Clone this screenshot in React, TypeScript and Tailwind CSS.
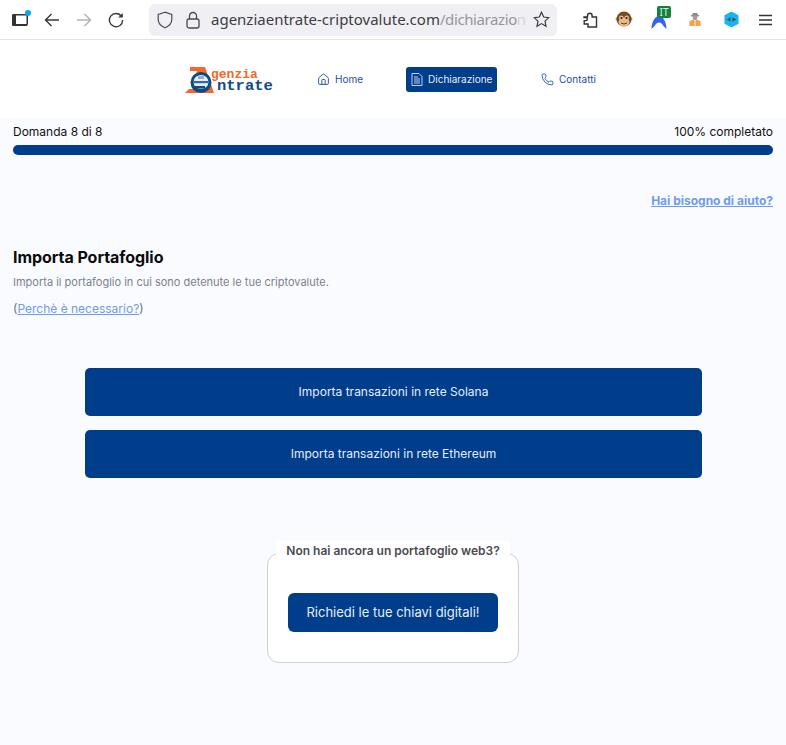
import React from "react";
import { House, Phone } from "lucide-react";

const Nav = ({ icon, label, active }: { icon: React.ReactNode; label: string; active?: boolean }) => (
  <div className={active ? "flex h-[25px] w-[91px] items-center gap-[5px] rounded-[3px] bg-[#003d8a] pl-[5px] text-[10px] text-[#e4eefc]" : "flex h-[25px] items-center gap-[5px] px-[6px] text-[10px] text-[#1d4f9c]"}>
    {icon}
    <span>{label}</span>
  </div>
);

export default function App() {
  return (
    <div className="flex h-[745px] w-[786px] flex-col overflow-hidden bg-[#fafbfe] font-['Inter',sans-serif]">
      {/* browser toolbar */}
      <div className="flex h-[40px] shrink-0 items-center border-b border-[#e3e3e5] bg-white">
        <div className="relative ml-[12px] h-[12px] w-[16px]">
          <svg className="block" width="16" height="12" viewBox="0 0 16 12"><rect x="0.75" y="0.75" width="14.5" height="10.5" rx="1.5" fill="none" stroke="#333" strokeWidth="1.5"/><path d="M1.500 0H4V10H15V12H1.500A1.500 1.500 0 0 1 0 10.500V1.500A1.500 1.500 0 0 1 1.500 0z" fill="#333"/></svg>
          <span className="absolute right-[-3px] top-[-4px] h-[6px] w-[6px] rounded-full bg-[#0ea5f0]" />
        </div>
        <svg className="ml-[16px]" width="16" height="16" viewBox="0 0 16 16" fill="none" stroke="#3a3a3c" strokeWidth="1.4"><path d="M15 8H1.500M7.500 2 1.500 8l6 6"/></svg>
        <svg className="ml-[16px]" width="16" height="16" viewBox="0 0 16 16" fill="none" stroke="#b4b4b6" strokeWidth="1.4"><path d="M1 8h13.500M8.500 2l6 6-6 6"/></svg>
        <svg className="ml-[16px]" width="16" height="16" viewBox="0 0 16 16" fill="none" stroke="#3a3a3c" strokeWidth="1.4"><path d="M13.500 4.500A6.600 6.600 0 1 0 14.600 8"/><path d="M14.800 1v4.600h-4.600z" fill="#3a3a3c" stroke="none"/></svg>
        <div className="ml-[25px] flex h-[32px] w-[408px] items-center rounded-[6px] bg-[#f0f0f4] pl-[8px]">
          <svg width="16" height="18" viewBox="0 0 16 18" fill="none" stroke="#4a4a4f" strokeWidth="1.2"><path d="M8 1.200 1.200 3.400v5.200c0 3.800 3 6.600 6.800 8.200 3.800-1.600 6.800-4.400 6.800-8.200V3.400z"/></svg>
          <svg className="ml-[13px]" width="14" height="18" viewBox="0 0 14 18" fill="none" stroke="#4a4a4f" strokeWidth="1.3"><rect x="1" y="8" width="12" height="9" rx="2"/><path d="M3.500 8V5a3.500 3.500 0 0 1 7 0v3"/></svg>
          <div className="ml-[11px] w-[314px] whitespace-nowrap font-['Noto_Sans',sans-serif] text-[15px] text-[#3d3d42]">
            agenziaentrate-criptovalute.com<span className="tracking-[-0.4px] text-[#96969b]">/dichiarazio</span><span className="text-[#d4d4d8]">n</span>
          </div>
          <svg className="ml-[8px]" width="17" height="17" viewBox="0 0 17 17" fill="none" stroke="#3a3a3c" strokeWidth="1.2"><path d="M8.500 1.200 10.700 6l5.100.6-3.800 3.500 1 5.100-4.500-2.600L4 15.200l1-5.100L1.200 6.600 6.300 6z"/></svg>
        </div>
        <svg className="ml-[26px]" width="15" height="17" viewBox="0 0 15 17" fill="none" stroke="#333" strokeWidth="1.4"><path d="M1 6h3.500V4.500a2.300 2.300 0 0 1 4.600 0V6h4.400v10H5v-3H1.200v-3.400H3c1.800 0 1.800-3 0-3H1z"/></svg>
        <svg className="ml-[17px]" width="18" height="17" viewBox="0 0 18 17"><circle cx="2.500" cy="8" r="2" fill="#c99a63"/><circle cx="15.500" cy="8" r="2" fill="#c99a63"/><circle cx="9" cy="8" r="7.500" fill="#7a4a21"/><ellipse cx="9" cy="11" rx="5.500" ry="4.500" fill="#e6b98a"/><circle cx="6.300" cy="6.700" r="2.300" fill="#e6b98a"/><circle cx="11.700" cy="6.700" r="2.300" fill="#e6b98a"/><circle cx="6.500" cy="7" r="1" fill="#222"/><circle cx="11.500" cy="7" r="1" fill="#222"/><path d="M6 12q3 2 6 0" stroke="#6b3a18" fill="none"/></svg>
        <div className="relative ml-[18px] h-[20px] w-[20px]">
          <svg className="absolute left-0 top-[5px]" width="16" height="14" viewBox="0 0 16 14"><path d="M0.500 14C0.500 7 4 1 8 1s7.500 6 7.500 13l-3-3C11 8.500 9.500 7.500 8 7.500S5 8.500 3.500 11z" fill="#3563f0"/></svg>
          <span className="absolute left-[6px] top-[-4px] flex h-[12px] w-[14px] items-center justify-center rounded-[2px] bg-[#15803d] font-['Noto_Sans',sans-serif] text-[10px] leading-none text-[#d7f5df]">IT</span>
        </div>
        <svg className="ml-[18px]" width="12" height="15" viewBox="0 0 14 15"><ellipse cx="7" cy="3" rx="5" ry="1.200" fill="#9a9a9a"/><rect x="4" y="0" width="6" height="3" rx="1" fill="#8a8a8a"/><circle cx="7" cy="5.500" r="2.800" fill="#9f9f9f"/><path d="M0.500 15V9.500L5 7.500 7 9.500l2-2 4.500 2V15z" fill="#f4a04e"/><path d="M7 9.500V15" stroke="#fff"/></svg>
        <svg className="ml-[23px]" width="15" height="17" viewBox="0 0 16 18"><path d="M8 0.500 15.500 4.500v9L8 17.500.5 13.500v-9z" fill="#17b6ee"/><path d="M3 9l4-2.500v5zM13 9 9 6.500v5z" fill="#3f4d5c"/></svg>
        <svg className="ml-[20px]" width="13" height="12" viewBox="0 0 13 12" stroke="#333" strokeWidth="1.3"><path d="M0 1.500h13M0 6h13M0 10.500h13"/></svg>
      </div>

      {/* site header */}
      <div className="flex h-[78px] shrink-0 items-center bg-white pl-[185px]">
        <div className="flex h-[30px] w-[88px] shrink-0 items-center">
          <svg width="32" height="27" viewBox="0 0 32 27" className="shrink-0">
            <path d="M5 1H20L29 27H0L4 23H8L12 5H5z" fill="#f26a2a" />
            <circle cx="16" cy="16.500" r="10.500" fill="#0f4c86" />
            <ellipse cx="16" cy="16" rx="7.500" ry="7" fill="#e8eef6" />
            <path d="M8.500 15h15v2.200h-15z" fill="#2d6aa8" />
            <path d="M8 20h12v2.500H8z" fill="#0f4c86" />
            <path d="M13 10h6v3h-6z" fill="#8fb0d0" />
          </svg>
          <div className="ml-[-6px] mt-[3px] flex flex-col font-['Liberation_Mono',monospace] font-bold">
            <span className="text-[13px] leading-[11px] text-[#f26a2a]">genzia</span>
            <span className="ml-[6px] text-[15.500px] leading-[12px] text-[#0f4c86]">ntrate</span>
          </div>
        </div>
        <div className="ml-[38px]">
          <Nav label="Home" icon={<House size={13} strokeWidth={1.7} color="#1d4f9c" />} />
        </div>
        <div className="ml-[37px]">
          <Nav active label="Dichiarazione" icon={<svg width="12" height="13" viewBox="0 0 12 13" fill="none" stroke="#bcd4f5" strokeWidth="1"><path d="M1 .5h7l3 3v9H1zM3 4h4M3 6h6M3 8h6M3 10h6"/></svg>} />
        </div>
        <div className="ml-[38px]">
          <Nav label="Contatti" icon={<Phone size={13} strokeWidth={1.6} color="#1d4f9c" />} />
        </div>
      </div>

      {/* main */}
      <div className="flex flex-col px-[13px]">
        <div className="mt-[6px] flex items-center justify-between text-[12px] leading-[16px] text-[#111]">
          <span>Domanda 8 di 8</span>
          <span>100% completato</span>
        </div>
        <div className="mt-[5px] h-[10px] rounded-full bg-[#003d8a]" />
        <div className="mt-[38px] text-right text-[12px] font-bold leading-[16px] text-[#6d9bee] underline">Hai bisogno di aiuto?</div>
        <h1 className="mt-[36px] text-[16px] font-bold leading-[24px] tracking-[-0.05px] text-[#0a0a0a]">Importa Portafoglio</h1>
        <p className="mt-[6px] text-[11px] leading-[14px] text-[#7b8190]">Importa il portafoglio in cui sono detenute le tue criptovalute.</p>
        <p className="mt-[12px] text-[12px] leading-[16px] text-[#6b7280]">(<span className="text-[#6d9bee] underline">Perchè è necessario?</span>)</p>

        <div className="ml-[72px] mr-[71px] mt-[51px] flex flex-col gap-[14px]">
          <div className="flex h-[48px] items-center justify-center rounded-[5px] bg-[#003d8a] text-[12px] text-[#e4eefc]">Importa transazioni in rete Solana</div>
          <div className="flex h-[48px] items-center justify-center rounded-[5px] bg-[#003d8a] text-[12px] text-[#e4eefc]">Importa transazioni in rete Ethereum</div>
        </div>

        <div className="relative mx-auto mt-[75px] flex h-[110px] w-[252px] items-center justify-center rounded-[12px] border border-[#cfcfd2] bg-white pt-[9px]">
          <div className="absolute left-[8px] top-[-13px] flex h-[20px] w-[234px] items-center justify-center bg-white text-[12px] font-semibold text-[#4b4b52]">Non hai ancora un portafoglio web3?</div>
          <div className="flex h-[39px] w-[210px] items-center justify-center rounded-[6px] bg-[#003d8a] text-[13px] text-[#e4eefc]">Richiedi le tue chiavi digitali!</div>
        </div>
      </div>
    </div>
  );
}
